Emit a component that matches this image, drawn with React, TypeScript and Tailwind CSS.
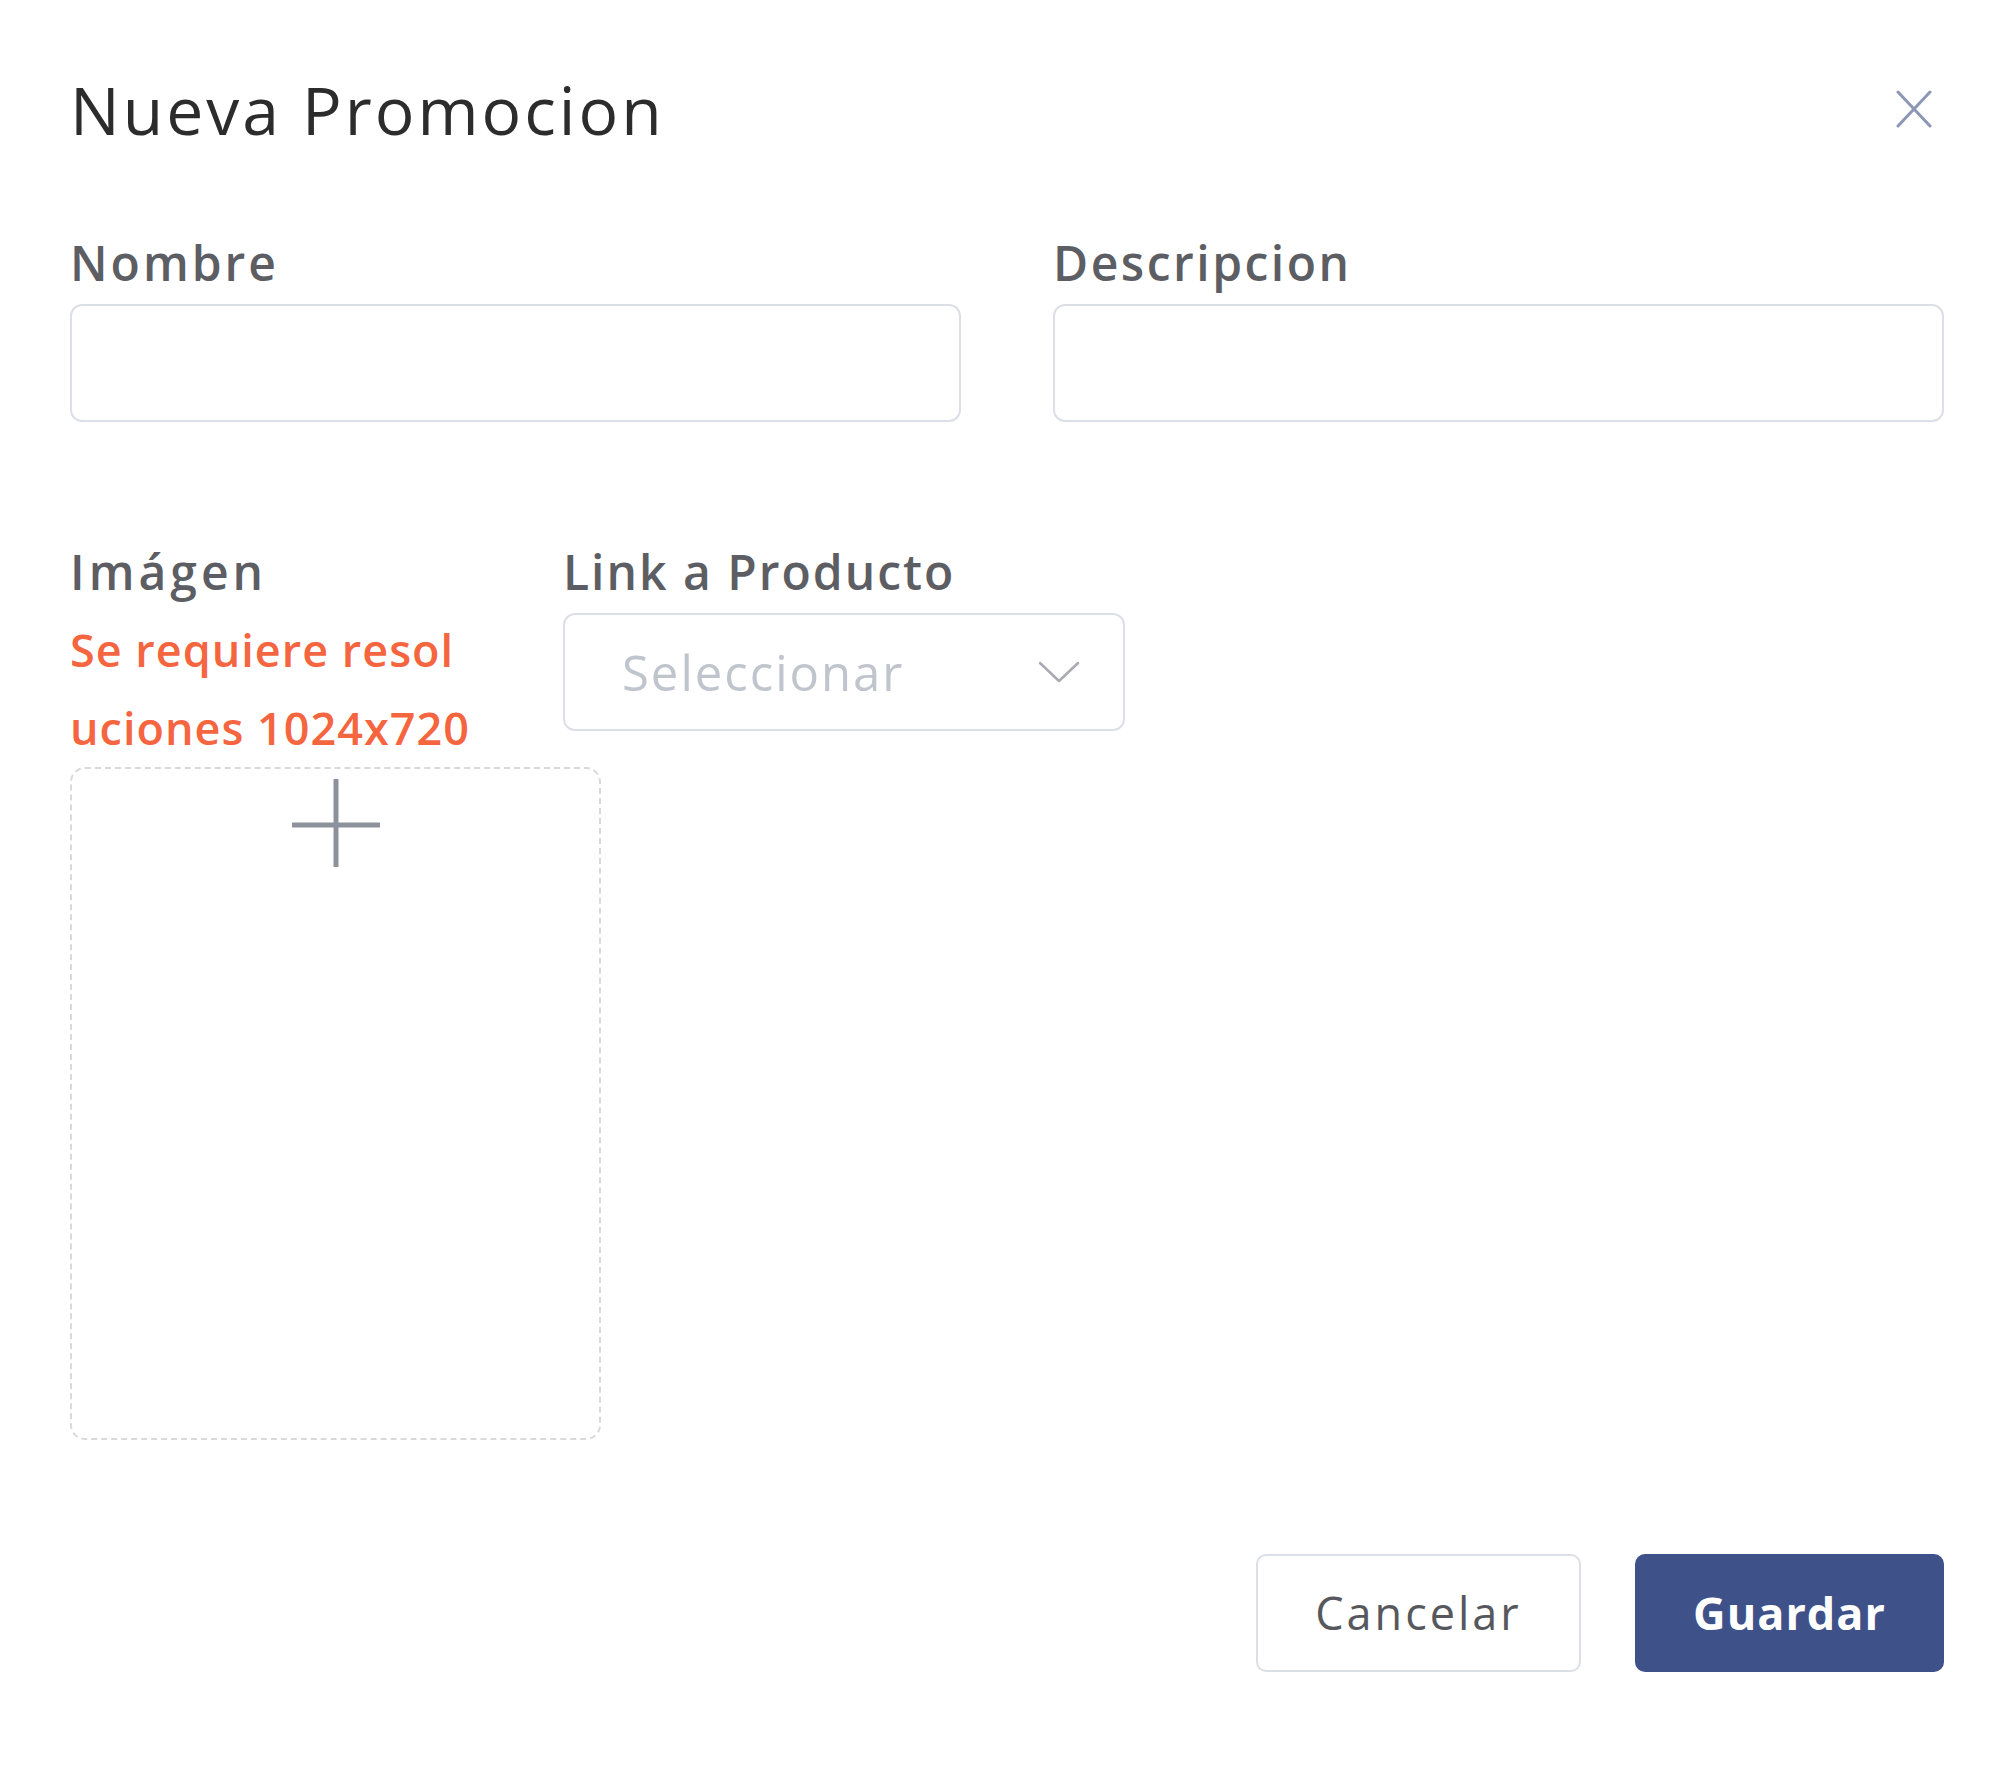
export default function App() {
  return (
    <div className="min-h-screen bg-white pl-[70px] pr-[52px] pt-[69px] font-['Open_Sans',sans-serif] text-[#5c5e63]">
      {/* header */}
      <div className="flex h-[80px] items-center justify-between">
        <h1 className="text-[66px] font-normal leading-[80px] tracking-[3px] text-[#2c2c2c]">Nueva Promocion</h1>
        <button className="mr-[12px] flex h-[38px] w-[36px] items-center justify-center">
          <svg width="36" height="38" viewBox="0 0 36 38" fill="none" stroke="#8c96b5" strokeWidth="3" strokeLinecap="round">
            <line x1="2" y1="2" x2="34" y2="36" />
            <line x1="34" y1="2" x2="2" y2="36" />
          </svg>
        </button>
      </div>

      {/* nombre / descripcion */}
      <div className="mt-[84px] grid grid-cols-2 gap-x-[92px]">
        <div>
          <label className="block text-[48px] font-semibold leading-[60px] tracking-[3px]">Nombre</label>
          <input className="mt-[11px] block h-[118px] w-full rounded-[12px] border-2 border-[#dcdfe6] px-6 text-[45px] outline-none" />
        </div>
        <div>
          <label className="block text-[48px] font-semibold leading-[60px] tracking-[2.5px]">Descripcion</label>
          <input className="mt-[11px] block h-[118px] w-full rounded-[12px] border-2 border-[#dcdfe6] px-6 text-[45px] outline-none" />
        </div>
      </div>

      {/* imagen / link */}
      <div className="mt-[120px] flex">
        <div className="w-[493px] shrink-0">
          <label className="block text-[48px] font-semibold leading-[60px] tracking-[4px]">Imágen</label>
          <p className="mt-[9px] text-[45px] font-semibold leading-[78px] tracking-[1px] text-[#f5653f]">
            <span className="block">Se requiere resol</span>
            <span className="block">uciones 1024x720</span>
          </p>
          <div className="flex h-[673px] w-[531px] justify-center rounded-[15px] border-2 border-dashed border-[#d9d9d9] pt-[10px]">
            <svg width="88" height="88" viewBox="0 0 88 88" fill="none" stroke="#8c929b" strokeWidth="5">
              <line x1="44" y1="0" x2="44" y2="88" />
              <line x1="0" y1="46" x2="88" y2="46" />
            </svg>
          </div>
        </div>
        <div>
          <label className="block text-[48px] font-semibold leading-[60px] tracking-[2px]">Link a Producto</label>
          <div className="mt-[11px] flex h-[118px] w-[562px] items-center justify-between rounded-[12px] border-2 border-[#dcdfe6] pl-[57px] pr-[43px]">
            <span className="text-[49px] leading-none tracking-[2px] text-[#c0c4cc]">Seleccionar</span>
            <svg width="42" height="22" viewBox="0 0 42 22" fill="none" stroke="#a8abb2" strokeWidth="2.5" strokeLinecap="round" strokeLinejoin="round">
              <polyline points="2,2 21,20 40,2" />
            </svg>
          </div>
        </div>
      </div>

      {/* footer */}
      <div className="mt-[114px] flex justify-end gap-[54px]">
        <button className="h-[118px] w-[325px] rounded-[10px] border-2 border-[#dcdfe6] bg-white text-[45px] font-medium tracking-[3px] text-[#56585d]">
          Cancelar
        </button>
        <button className="h-[118px] w-[309px] rounded-[10px] bg-[#3f5189] text-[45px] font-bold tracking-[1px] text-white">
          Guardar
        </button>
      </div>
    </div>
  );
}
